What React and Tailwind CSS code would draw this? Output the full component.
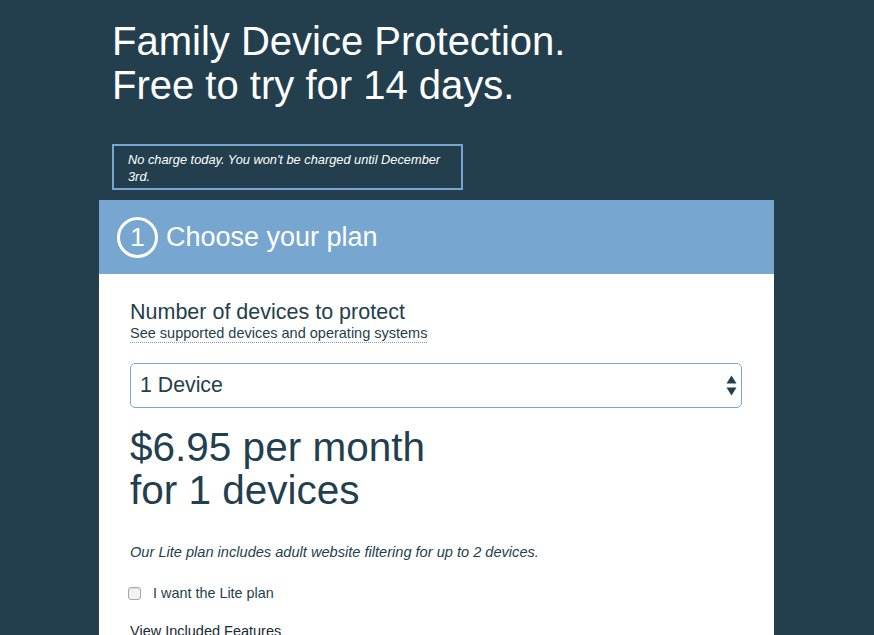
import React from "react";

const App = () => {
    return (
        <div className="min-h-screen w-full bg-[#233f4e] font-['Liberation_Sans',Arial,sans-serif] overflow-hidden">
            <div className="pl-[99px] w-[774px]">
                <h1 className="pl-[13px] pt-[19px] text-[40px] leading-[44px] text-white">
                    Family Device Protection.
                    <br />
                    Free to try for 14 days.
                </h1>

                <div className="ml-[13px] mt-[37px] w-[351px] h-[46px] border-2 border-[#77a7d1] pl-[14px] pr-2 pt-[5px]">
                    <p className="text-[12.8px] leading-[17px] italic text-white">
                        No charge today. You won't be charged until December 3rd.
                    </p>
                </div>

                <div className="mt-[10px] bg-white w-[675px]">
                    <div className="bg-[#77a7d1] h-[74px] flex items-center pl-[18px] gap-[8px]">
                        <div className="w-[41px] h-[41px] rounded-full border-[3px] border-white flex items-center justify-center text-white text-[26px] leading-none">
                            1
                        </div>
                        <span className="text-white text-[27px] leading-none">Choose your plan</span>
                    </div>

                    <div className="px-[31px] pt-[26px] text-[#233f4e]">
                        <h2 className="text-[21.5px] leading-[24px]">Number of devices to protect</h2>
                        <a className="block w-fit text-[14.5px] leading-[18px] border-b border-dotted border-[#8a9aa3]">
                            See supported devices and operating systems
                        </a>

                        <div className="mt-[20px] w-[612px] h-[45px] border border-[#77a7d1] rounded-[5px] flex items-center justify-between pl-[9px] pr-[4px]">
                            <span className="text-[21.3px]">1 Device</span>
                            <svg width="11" height="21" viewBox="0 0 11 21">
                                <path d="M5.5 0.5 L10.5 8.5 L0.5 8.5 Z" fill="#233f4e" />
                                <path d="M0.5 12.5 L10.5 12.5 L5.5 20.5 Z" fill="#233f4e" />
                            </svg>
                        </div>

                        <p className="mt-[18px] text-[40.5px] leading-[43px]">
                            $6.95 per month
                            <br />
                            for 1 devices
                        </p>

                        <p className="mt-[31px] text-[14.6px] italic leading-[18px]">
                            Our Lite plan includes adult website filtering for up to 2 devices.
                        </p>

                        <label className="mt-[23px] flex items-center gap-[12px]">
                            <span className="w-[13px] h-[13px] rounded-[3px] border border-[#a8a8a8] bg-[#f2f2f2] -ml-[2px] shadow-[inset_0_1px_1px_rgba(0,0,0,0.08)]" />
                            <span className="text-[14.4px] leading-[18px]">I want the Lite plan</span>
                        </label>

                        <p className="mt-[20px] text-[14.5px] leading-[18px] text-[#1c2a33]">View Included Features</p>
                    </div>
                </div>
            </div>
        </div>
    );
};

export default App;
